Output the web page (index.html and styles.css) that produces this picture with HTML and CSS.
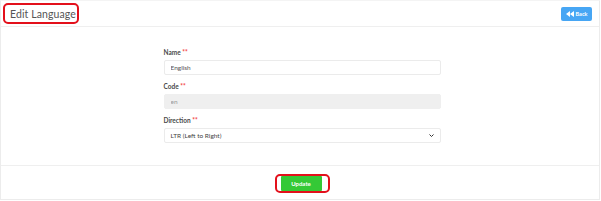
FILE: index.html
```html
<!DOCTYPE html>
<html>
<head>
<meta charset="utf-8">
<link rel="stylesheet" href="styles.css">
</head>
<body>
<div class="card">
  <div class="card-header">
    <h1 class="title">Edit Language</h1>
    <span class="mark mark-title"></span>
    <button class="btn-back">
      <svg class="back-icon" viewBox="0 0 16 12" width="8" height="6"><path d="M8 0 L0 6 L8 12 Z M16 0 L8 6 L16 12 Z" fill="#fff"/></svg>
      Back
    </button>
  </div>
  <div class="card-body">
    <form class="form">
      <div class="field">
        <label class="label">Name <span class="req">**</span></label>
        <input class="input" type="text" value="English">
      </div>
      <div class="field">
        <label class="label">Code <span class="req">**</span></label>
        <input class="input input-disabled" type="text" value="en" disabled>
      </div>
      <div class="field">
        <label class="label">Direction <span class="req">**</span></label>
        <div class="select">
          <span>LTR (Left to Right)</span>
          <svg class="chev" viewBox="0 0 10 6" width="5" height="3"><path d="M1 1 L5 5 L9 1" stroke="#333" stroke-width="2" fill="none"/></svg>
        </div>
      </div>
    </form>
  </div>
  <div class="card-footer">
    <div class="update-wrap">
      <button class="btn-update">Update</button>
      <span class="mark mark-update"></span>
    </div>
  </div>
</div>
</body>
</html>
```
FILE: styles.css
```css
* { box-sizing: border-box; }
html, body { margin: 0; padding: 0; background: #fff; }
body { font-family: Lato, "Open Sans", sans-serif; width: 601px; height: 201px; overflow: hidden; }

.card {
  width: 600px;
  height: 200px;
  border: 1px solid #ececec;
  border-top-color: #f4f4f4;
  display: flex;
  flex-direction: column;
}

.card-header {
  position: relative;
  height: 26px;
  flex: none;
  border-bottom: 1px solid #efefef;
  display: flex;
  align-items: center;
  justify-content: space-between;
  padding: 0 7px 0 9px;
}
.title {
  margin: 0;
  font-size: 10.5px;
  font-weight: 400;
  color: #555;
  letter-spacing: 0.1px;
}
.mark {
  position: absolute;
  border: 2px solid #e3101b;
  border-radius: 5px;
  pointer-events: none;
}
.mark-title { left: 2px; top: 2px; width: 76px; height: 21px; }

.btn-back {
  height: 14px;
  width: 31px;
  margin-top: 1px;
  border: none;
  border-radius: 2px;
  background: #47a6f4;
  color: #fff;
  font-family: inherit;
  font-size: 5.5px;
  font-weight: 700;
  padding: 0;
  display: flex;
  align-items: center;
  justify-content: center;
  gap: 2px;
}

.card-body {
  height: 138px;
  flex: none;
  display: flex;
  justify-content: center;
  padding: 22px 0 0 4px;
}
.form {
  width: 277px;
  display: flex;
  flex-direction: column;
  gap: 8px;
}
.field { display: flex; flex-direction: column; gap: 3px; }
.label {
  font-size: 6.5px;
  font-weight: 700;
  color: #4a4a4a;
  line-height: 8px;
}
.req { color: #f24242; font-weight: 700; }
.input, .select {
  height: 15px;
  border: 1px solid #ebebeb;
  border-radius: 2px;
  padding: 0 6px;
  font-family: inherit;
  font-size: 6.5px;
  color: #555;
  background: #fff;
  outline: none;
}
.input-disabled { background: #efefef; border-color: #efefef; color: #999; }
.select {
  display: flex;
  align-items: center;
  justify-content: space-between;
  color: #444;
}

.card-footer {
  flex: 1;
  border-top: 1px solid #efefef;
  display: flex;
  justify-content: center;
  align-items: flex-start;
  padding-top: 10px;
}
.update-wrap { position: relative; height: 15px; margin-left: 2px; }
.btn-update {
  display: block;
  height: 15px;
  width: 41px;
  border: none;
  border-radius: 1px;
  background: #34c936;
  color: #fff;
  font-family: inherit;
  font-size: 6px;
  font-weight: 700;
  line-height: 15px;
  padding: 0;
}
.mark-update { left: -6px; top: -2px; width: 55px; height: 19px; }
```
